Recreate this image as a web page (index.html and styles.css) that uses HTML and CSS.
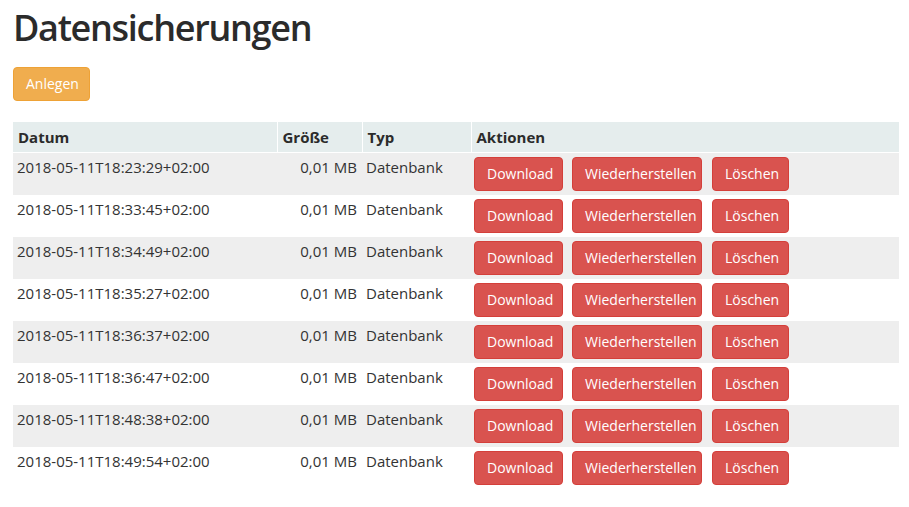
FILE: index.html
```html
<!DOCTYPE html>
<html lang="de">
<head>
<meta charset="utf-8">
<title>Datensicherungen</title>
<link rel="stylesheet" href="styles.css">
</head>
<body>
<div class="page">
  <h1 class="title">Datensicherungen</h1>
  <button class="btn btn-warning">Anlegen</button>
  <table class="backups">
    <thead>
      <tr>
        <th class="col-date">Datum</th>
        <th class="col-size">Größe</th>
        <th class="col-type">Typ</th>
        <th class="col-actions">Aktionen</th>
      </tr>
    </thead>
    <tbody>
      <tr><td>2018-05-11T18:23:29+02:00</td><td class="num">0,01 MB</td><td>Datenbank</td><td class="actions"><button class="btn btn-danger">Download</button><button class="btn btn-danger">Wiederherstellen</button><button class="btn btn-danger">Löschen</button></td></tr>
      <tr><td>2018-05-11T18:33:45+02:00</td><td class="num">0,01 MB</td><td>Datenbank</td><td class="actions"><button class="btn btn-danger">Download</button><button class="btn btn-danger">Wiederherstellen</button><button class="btn btn-danger">Löschen</button></td></tr>
      <tr><td>2018-05-11T18:34:49+02:00</td><td class="num">0,01 MB</td><td>Datenbank</td><td class="actions"><button class="btn btn-danger">Download</button><button class="btn btn-danger">Wiederherstellen</button><button class="btn btn-danger">Löschen</button></td></tr>
      <tr><td>2018-05-11T18:35:27+02:00</td><td class="num">0,01 MB</td><td>Datenbank</td><td class="actions"><button class="btn btn-danger">Download</button><button class="btn btn-danger">Wiederherstellen</button><button class="btn btn-danger">Löschen</button></td></tr>
      <tr><td>2018-05-11T18:36:37+02:00</td><td class="num">0,01 MB</td><td>Datenbank</td><td class="actions"><button class="btn btn-danger">Download</button><button class="btn btn-danger">Wiederherstellen</button><button class="btn btn-danger">Löschen</button></td></tr>
      <tr><td>2018-05-11T18:36:47+02:00</td><td class="num">0,01 MB</td><td>Datenbank</td><td class="actions"><button class="btn btn-danger">Download</button><button class="btn btn-danger">Wiederherstellen</button><button class="btn btn-danger">Löschen</button></td></tr>
      <tr><td>2018-05-11T18:48:38+02:00</td><td class="num">0,01 MB</td><td>Datenbank</td><td class="actions"><button class="btn btn-danger">Download</button><button class="btn btn-danger">Wiederherstellen</button><button class="btn btn-danger">Löschen</button></td></tr>
      <tr><td>2018-05-11T18:49:54+02:00</td><td class="num">0,01 MB</td><td>Datenbank</td><td class="actions"><button class="btn btn-danger">Download</button><button class="btn btn-danger">Wiederherstellen</button><button class="btn btn-danger">Löschen</button></td></tr>
    </tbody>
  </table>
</div>
</body>
</html>
```

FILE: styles.css
```css
* { box-sizing: border-box; }
html, body { margin: 0; padding: 0; background: #fff; }
body {
  font-family: "Open Sans", "Noto Sans", "Liberation Sans", sans-serif;
  font-size: 15px;
  line-height: 21px;
  color: #333;
}
.page {
  padding: 6px 10px 0 13px;
}
.title {
  margin: 0;
  font-size: 36px;
  line-height: 44px;
  font-weight: 600;
  letter-spacing: -1.3px;
  color: #2b2b2b;
}
.btn {
  display: inline-block;
  font-family: inherit;
  font-size: 14px;
  line-height: 20px;
  padding: 6px 12px;
  border: 1px solid transparent;
  border-radius: 4px;
  color: #fff;
  cursor: pointer;
  white-space: nowrap;
}
.btn-warning {
  background: #f0ad4e;
  border-color: #eea236;
  margin-top: 17px;
  width: 77px;
}
.btn-danger {
  background: #d9534f;
  border-color: #d43f3a;
}
.backups {
  margin-top: 21px;
  width: 886px;
  border-collapse: collapse;
}
.backups th {
  background: #e5eded;
  text-align: left;
  font-weight: 700;
  padding: 5px 5px 4px;
  border-right: 1px solid #fff;
  border-bottom: 1px solid #fff;
  color: #2b2b2b;
}
.backups th:last-child { border-right: none; }
.col-date { width: 264px; }
.col-size { width: 85px; }
.col-type { width: 109px; }
.backups td {
  padding: 4px;
  vertical-align: top;
  height: 42px;
}
.backups td.num { text-align: right; padding-right: 5px; }
.backups tbody tr:nth-child(odd) td { background: #eeeeee; }
.actions {
  display: flex;
  gap: 9px;
}
.backups td.actions { padding-left: 3px; }
.actions .btn:nth-child(1) { width: 89px; }
.actions .btn:nth-child(2) { width: 130px; }
.actions .btn:nth-child(3) { width: 77px; margin-left: 1px; }
```
